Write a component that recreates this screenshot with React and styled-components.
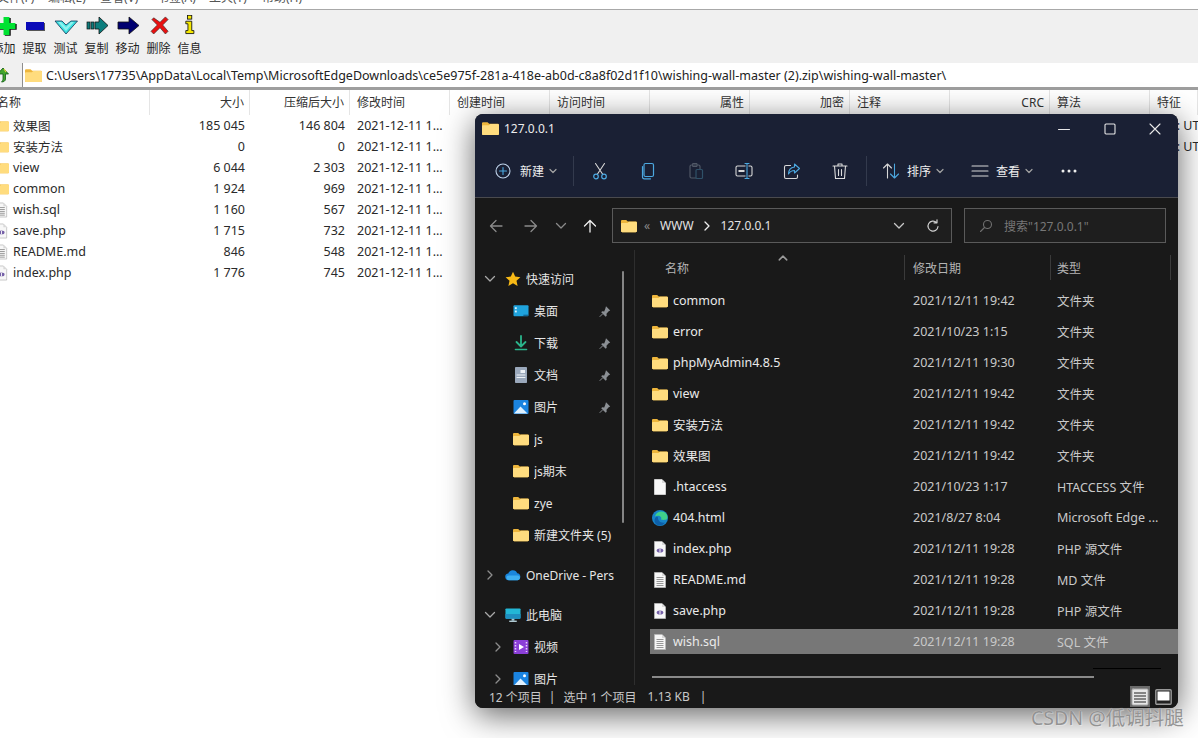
import React from "react";
import styled, { createGlobalStyle } from "styled-components";

const Global = createGlobalStyle`
  html, body { margin: 0; padding: 0; background: #fff; }
  * { box-sizing: border-box; }
  body { font-family: "Noto Sans", "Noto Sans CJK SC", sans-serif; font-size: 12.5px; color: #222; }
`;

const Page = styled.div`
  position: relative; width: 1198px; height: 738px; overflow: hidden; background: #fff;
`;
const MenuBar = styled.div`
  height: 10px; display: flex; align-items: flex-end; overflow: hidden; padding-bottom: 4px;
  border-bottom: 1px solid #a8a8a8; line-height: 14px; font-size: 12px; color: #555;
  gap: 14px; white-space: nowrap; margin-left: -3px;
`;
const MenuItem = styled.span` flex: none; width: ${p => p.$w}px; `;
const Toolbar = styled.div`
  height: 52px; background: #f0f0f0; display: flex; margin-left: -12px;
`;
const ToolButton = styled.div`
  width: 31px; display: flex; flex-direction: column; align-items: center; padding-top: 5px; flex: none;
`;
const ToolLabel = styled.span` font-size: 12px; line-height: 14px; margin-top: 1px; white-space: nowrap; color: #1f1f1f; `;
const PathBar = styled.div`
  height: 28px; background: #f0f0f0; display: flex; align-items: stretch; padding-top: 1px;
  border-bottom: 3px solid #9e9e9e;
`;
const UpBox = styled.div` display: flex; align-items: center; margin-left: -4px; flex: none; width: 26px; `;
const PathBox = styled.div`
  flex: 1; background: #fff; border-left: 1px solid #8e8e8e; display: flex; align-items: center;
  padding-left: 2px; gap: 4px; white-space: nowrap; font-size: 12.5px; color: #222; overflow: hidden;
`;
const ListGrid = styled.div`
  display: grid; grid-template-columns: 150px repeat(10, 100px) 1fr; align-items: center;
  height: ${p => p.$h}px;
  white-space: nowrap;
`;
const HeadCell = styled.div`
  height: 100%; display: flex; align-items: center; font-size: 12px; color: #333; padding-bottom: 1px;
  border-right: 1px solid #e5e5e5; padding-left: ${p => (p.$first ? 0 : 7)}px; padding-right: ${p => (p.$right ? 5 : 0)}px;
  justify-content: ${p => (p.$right ? "flex-end" : "flex-start")};
  margin-left: ${p => (p.$first ? -3 : 0)}px;
`;
const Cell = styled.div`
  overflow: hidden; padding: 0 ${p => (p.$right ? 5 : 0)}px 0 ${p => (p.$right ? 0 : 7)}px; color: #2a2a2a;
  text-align: ${p => (p.$right ? "right" : "left")};
`;
const NameCell = styled.div` display: flex; align-items: center; gap: 4px; margin-left: -6px; color: #2a2a2a; `;
const ListIcon = styled.span` width: 15px; flex: none; display: flex; justify-content: flex-end; `;

const Explorer = styled.section`
  position: absolute; left: 475px; top: 114px; width: 703px; height: 594px;
  border-radius: 8px; overflow: hidden; display: flex; flex-direction: column;
  background: #191919; color: #e6e6e6; box-shadow: 0 7px 32px rgba(0,0,0,.62);
`;
const TitleBar = styled.div` height: 29px; background: #1a2034; display: flex; align-items: center; padding-left: 7px; gap: 5px; font-size: 12px; color: #ececec; `;
const WinControls = styled.div` margin-left: auto; display: flex; `;
const WinBtn = styled.div` width: 45.5px; display: flex; justify-content: center; align-items: center; `;
const CommandBar = styled.div`
  height: 55px; background: #1a2034; border-bottom: 1px solid #4a4a4e; display: flex; align-items: center; padding: 1px 0 0 16px;
`;
const CmdBtn = styled.div`
  width: ${p => p.$w}px; flex: none; display: flex; align-items: center;
  justify-content: ${p => (p.$center ? "center" : "flex-start")}; color: #eee; font-size: 12px;
`;
const CmdSlot = styled.span` width: 24px; flex: none; display: flex; justify-content: center; `;
const CmdLabel = styled.span` margin-left: ${p => p.$ml}px; `;
const CmdCaret = styled.span` margin-left: 5px; display: flex; `;
const CmdSep = styled.div` width: 1px; height: 30px; background: #333a4d; flex: none; margin: 0 ${p => p.$r}px 0 ${p => p.$l}px; `;
const NavBar = styled.div` height: 52px; display: flex; padding: 10px 0 7px 4px; `;
const NavBtn = styled.div` width: ${p => p.$w}px; flex: none; display: flex; align-items: center; justify-content: center; `;
const AddressBox = styled.div`
  width: 340px; margin-left: 5px; border: 1px solid #5a5a5a; background: #1e1e1e; display: flex; align-items: center;
  padding-left: 8px; font-size: 12px; color: #e4e4e4; flex: none;
`;
const Crumb = styled.span` display: flex; margin-left: ${p => p.$ml}px; color: ${p => p.$c || "inherit"}; `;
const SearchBox = styled.div`
  width: 202px; margin-left: 12px; border: 1px solid #5a5a5a; background: #1e1e1e; display: flex; align-items: center;
  padding-left: 14px; gap: 11px; color: #777; font-size: 12px; flex: none;
`;
const Main = styled.div` flex: 1; min-height: 0; display: flex; overflow: hidden; `;
const Sidebar = styled.nav`
  position: relative; width: 160px; flex: none; border-right: 1px solid #2e2e2e; padding-top: 13px; overflow: hidden;
`;
const SideScroll = styled.div`
  position: absolute; left: 147px; top: 21px; width: 2px; height: 252px; background: #858585; border-radius: 1px;
`;
const SideRow = styled.div`
  width: 139px; height: 32px; display: flex; align-items: center; flex: none;
  padding-left: ${p => 7 + p.$level * 8}px; margin-top: ${p => p.$mt || 0}px; color: #e6e6e6; font-size: 12px;
`;
const Chevron = styled.span` width: 16px; flex: none; display: flex; justify-content: center; margin-right: 7px; `;
const SideIcon = styled.span` width: 16px; height: 16px; flex: none; display: flex; align-items: center; justify-content: center; margin-right: 5px; `;
const SideLabel = styled.span` flex: 1; min-width: 0; overflow: hidden; white-space: nowrap; `;
const Pin = styled.span` flex: none; width: 12px; margin-right: 3px; display: flex; `;
const Content = styled.div` position: relative; flex: 1; min-width: 0; padding: 5px 0 0 15px; `;
const FileGrid = styled.div`
  display: grid; grid-template-columns: 255px 146px 1fr; align-items: center; height: ${p => p.$h}px; white-space: nowrap;
`;
const FHead = styled.div`
  position: relative; height: 100%; display: flex; align-items: center; font-size: 12px; color: #b4b4b4;
  padding-left: ${p => p.$pl}px; width: ${p => p.$w || "auto"}; border-right: 1px solid #3a3a3a;
`;
const SortCaret = styled.span` position: absolute; left: 128px; top: -2px; display: flex; `;
const FileRows = styled.div` display: flex; flex-direction: column; gap: 6px; margin-top: 8px; `;
const FileRow = styled(FileGrid)` background: ${p => (p.$sel ? "#777" : "transparent")}; `;
const FName = styled.div` display: flex; align-items: center; gap: 5px; padding-left: 2px; color: #eaeaea; `;
const FIcon = styled.span` width: 16px; height: 16px; flex: none; display: flex; align-items: center; justify-content: center; `;
const FDate = styled.div` padding-left: 8px; color: #c9c9c9; `;
const FType = styled.div` padding-left: 6px; color: #c9c9c9; overflow: hidden; `;
const HScroll = styled.div` height: 2px; width: 442px; margin: 22px 0 0 2px; background: #8a8a8a; `;
const HLine = styled.div` position: absolute; left: 458px; top: 418px; width: 68px; height: 1px; background: #000; `;
const StatusBar = styled.div`
  height: 23px; background: #191919; display: flex; align-items: center; padding-left: 14px; font-size: 12px; color: #c8c8c8; white-space: nowrap;
`;
const StatusItem = styled.span` margin-right: ${p => p.$mr}px; `;
const StatusViews = styled.div` margin-left: auto; display: flex; align-items: center; gap: 3px; margin-right: 5px; `;
const ViewBtn = styled.span`
  width: 20px; height: 21px; display: flex; align-items: center; justify-content: center; background: ${p => (p.$on ? "#6a6a6a" : "transparent")};
`;
const Watermark = styled.div`
  position: absolute; left: 1031px; top: 705px; font-size: 19.5px; line-height: 26px; color: #939393; white-space: nowrap;
  text-shadow: 0 0 1px #e4e4e4, 1px 1px 0 rgba(255,255,255,.3);
`;

/* ---------- icons ---------- */
const Folder = ({ s = 16 }) => (
  <svg width={s} height={s} viewBox="0 0 16 16">
    <path d="M0 3.2C0 2.500.5 2 1.200 2h4l1.600 1.600h7.900c.7 0 1.300.6 1.300 1.300V13c0 .7-.6 1.200-1.300 1.200H1.200C.5 14.200 0 13.700 0 13z" fill="#eeb63c" />
    <path d="M0 6c0-.6.5-1 1-1h5.500l1.300-1.300h6.900c.7 0 1.300.5 1.300 1.200V13c0 .7-.6 1.200-1.300 1.200H1.200C.5 14.200 0 13.700 0 13z" fill="#ffdc7e" />
  </svg>
);
const Page16 = ({ lines, php, dim }) => (
  <svg width="16" height="16" viewBox="0 0 16 16">
    <path d="M2.500.5h7.500l3.500 3.500v11.500h-11z" fill="#f7f7f7" stroke={dim ? "#b9b9b9" : "#ddd"} strokeWidth=".8" />
    <path d="M10 .5v3.500h3.500" fill="#d8d8d8" />
    {lines && [5, 7, 9, 11, 13].map(y => <rect key={y} x="4.500" y={y} width="7" height=".9" fill="#8d8d8d" />)}
    {php && <><ellipse cx="8" cy="9.500" rx="3.300" ry="2" fill="#7560a8" /><rect x="7.500" y="7.800" width="1" height="3.500" fill="#f7f7f7" /></>}
  </svg>
);
const Edge = () => (
  <svg width="16" height="16" viewBox="0 0 16 16">
    <circle cx="8" cy="8" r="8" fill="#1784c9" />
    <path d="M3 6.500C4 2 9 .5 12.500 2.300 15.500 4 16 7.500 15 9c-1 1-4 1.200-6 .5 1.500-2.500-2-5-6-3z" fill="#3fd08a" />
    <path d="M6 8c0 3 3 5.500 7 4.500-2 3-6 4-9 1.500-2-2-2-5 0-7 .8-.5 2-.5 2 1z" fill="#0d5fa8" />
  </svg>
);
const Plus = () => (
  <svg width="26" height="26" viewBox="0 0 26 26">
    <g transform="translate(15.5 11) scale(.85) translate(-12 -13.500)">
      <path d="M10 4h7v7h7v7h-7v7h-7v-7H3v-7h7z" fill="#111" />
      <path d="M8.500 3h7v7h7v7h-7v7h-7v-7h-7v-7h7z" fill="#00e232" />
    </g>
  </svg>
);
const Minus = () => (
  <svg width="26" height="26" viewBox="0 0 26 26">
    <rect x="5" y="8" width="18" height="8" fill="#555" />
    <rect x="4" y="7" width="18" height="8" fill="#0a0ab8" />
  </svg>
);
const Check = () => (
  <svg width="26" height="26" viewBox="0 0 26 26">
    <path d="M2 6h7l4 4 5-4h6.500L13 19z" fill="#38e0e0" stroke="#135" strokeWidth=".8" />
    <path d="M5 7h3l5 5 5-5h3l-8 9z" fill="#8ef2ee" />
  </svg>
);
const ArrowCopy = () => (
  <svg width="26" height="26" viewBox="0 0 26 26">
    <g transform="translate(1 -2)">
      <rect x="2" y="9" width="3" height="7" fill="#0f7c7c" stroke="#111" strokeWidth=".7" />
      <rect x="6" y="9" width="3" height="7" fill="#0f7c7c" stroke="#111" strokeWidth=".7" />
      <path d="M10 9h4V4l9 8.500-9 8.500v-5h-4z" fill="#0c7d7d" stroke="#111" strokeWidth=".8" />
    </g>
  </svg>
);
const ArrowMove = () => (
  <svg width="26" height="26" viewBox="0 0 26 26">
    <path transform="translate(1 -2)" d="M2 9h11V4l10 8.500L13 21v-5H2z" fill="#000070" stroke="#111" strokeWidth=".8" />
  </svg>
);
const Cross = () => (
  <svg width="26" height="26" viewBox="0 0 26 26">
    <path transform="translate(14 10) scale(.9) translate(-13 -13)" d="M6 5l7 5 6-6 3 3-6 6 6 7-3 3-6-7-7 7-3-3 7-7-6-6z" fill="#e81010" stroke="#333" strokeWidth=".7" />
  </svg>
);
const Info = () => (
  <svg width="26" height="26" viewBox="0 0 26 26">
    <g transform="translate(2 -1) scale(.85)">
      <rect x="10" y="1.500" width="5" height="4.500" fill="#f5e800" stroke="#111" />
      <path d="M8 8.500h7v11h2.500v3.500H8v-3.500h2.500v-8H8z" fill="#f5e800" stroke="#111" />
    </g>
  </svg>
);
const Up = () => (
  <svg width="14" height="16" viewBox="0 0 14 16">
    <path d="M7 1l5.500 6H9.500v5c0 2-2 3-4 3 1-1 1.500-2 1.500-3V7H1.500z" fill="#42a52f" stroke="#0c5a12" strokeWidth=".8" />
    <path d="M8 2l2 3" stroke="#e5d43a" strokeWidth="1.200" />
  </svg>
);
const S = ({ w = 20, h = 20, vb = "0 0 20 20", children }) => (
  <svg width={w} height={h} viewBox={vb} fill="none" strokeLinecap="round" strokeLinejoin="round">{children}</svg>
);
const Caret = ({ c = "#a4a4a4", s = 8, w = 1.200, up }) => (
  <S w={s} h={s} vb="0 0 8 8"><path d={up ? "M1 5.500l3-3 3 3" : "M1 2.500l3 3 3-3"} stroke={c} strokeWidth={w} /></S>
);
const RightC = ({ c = "#8d8d8d" }) => <S w={8} h={10} vb="0 0 8 10"><path d="M2 1l4 4-4 4" stroke={c} strokeWidth="1.300" /></S>;
const DownC = ({ c = "#a9a9a9" }) => <S w={12} h={10} vb="0 0 12 10"><path d="M1.500 2.500l4.500 4.500 4.500-4.500" stroke={c} strokeWidth="1.300" /></S>;

const NewIcon = () => <S w={18} h={18} vb="0 0 18 18"><circle cx="9" cy="9" r="7" stroke="#bcd0e8" strokeWidth="1.100" /><path d="M9 5.500v7M5.500 9h7" stroke="#4ca8e0" strokeWidth="1.100" /></S>;
const Cut = () => <S><path d="M5.500 2.500l7 10.500M14.500 2.500l-7 10.500" stroke="#d8d8d8" strokeWidth="1.100" /><circle cx="6" cy="15.500" r="2.300" stroke="#4ca8e0" strokeWidth="1.200" /><circle cx="14" cy="15.500" r="2.300" stroke="#4ca8e0" strokeWidth="1.200" /></S>;
const CopyI = () => <S><rect x="6" y="2.500" width="9.500" height="13" rx="1.500" stroke="#4ca8e0" strokeWidth="1.200" /><path d="M4.500 5.500v10.500c0 1 .8 1.800 2 1.800h6" stroke="#4ca8e0" strokeWidth="1.200" /></S>;
const Paste = () => <S><rect x="4" y="4" width="10" height="13" rx="1.500" stroke="#505866" strokeWidth="1.200" /><rect x="7" y="2.500" width="4" height="3" stroke="#505866" /><rect x="10" y="8.500" width="6.500" height="9" rx="1" fill="#1a2034" stroke="#2f5168" strokeWidth="1.200" /></S>;
const Rename = () => <S><rect x="2" y="5" width="16" height="10" rx="1.500" stroke="#d8d8d8" strokeWidth="1.100" /><rect x="4.500" y="9" width="6" height="2" fill="#d8d8d8" /><rect x="11.500" y="3" width="3" height="14" fill="#1a2034" /><path d="M13 2.500v15M11 2.500h4M11 17.500h4" stroke="#4ca8e0" strokeWidth="1.100" /></S>;
const Share = () => <S><path d="M8.500 4.500H4c-1 0-1.500.6-1.500 1.500v10c0 1 .6 1.500 1.500 1.500h10c1 0 1.500-.6 1.500-1.500v-2" stroke="#d8d8d8" strokeWidth="1.100" /><path d="M12.500 3l5 4.500-5 4.500V9.500c-3 0-4.500 1-6 3.500 0-4 2-6.500 6-7z" stroke="#4ca8e0" strokeWidth="1.100" /></S>;
const Trash = () => <S><path d="M3 5h14M8 5V3h4v2M4.500 5l1 12.500h9l1-12.500M8.500 8.500v6M11.500 8.500v6" stroke="#dcdcdc" strokeWidth="1.100" /></S>;
const SortI = () => <S><path d="M6.500 17V3.500M2.500 7l4-4 4 4" stroke="#d8d8d8" strokeWidth="1.100" /><path d="M13.500 3v13.500M9.500 13l4 4 4-4" stroke="#4ca8e0" strokeWidth="1.100" /></S>;
const ViewI = () => <S w={18} h={14} vb="0 0 18 14"><path d="M1 2h16M1 7h16M1 12h16" stroke="#d8d8d8" strokeWidth="1.100" /></S>;
const More = () => <S w={18} h={6} vb="0 0 18 6"><circle cx="3" cy="3" r="1.500" fill="#eee" /><circle cx="9" cy="3" r="1.500" fill="#eee" /><circle cx="15" cy="3" r="1.500" fill="#eee" /></S>;
const Back = ({ c }) => <S w={14} h={14} vb="0 0 14 14"><path d="M13 7H1.500M7 1.500L1.500 7 7 12.500" stroke={c} strokeWidth="1.300" /></S>;
const Fwd = ({ c }) => <S w={14} h={14} vb="0 0 14 14"><path d="M1 7h11.500M7 1.500L12.500 7 7 12.500" stroke={c} strokeWidth="1.300" /></S>;
const UpA = () => <S w={14} h={14} vb="0 0 14 14"><path d="M7 13V1.500M1.500 7L7 1.500 12.500 7" stroke="#f0f0f0" strokeWidth="1.300" /></S>;
const Refresh = () => <S w={14} h={14} vb="0 0 14 14"><path d="M12 7.500a5 5 0 1 1-1.500-4M11 .8v3h-3" stroke="#cfcfcf" strokeWidth="1.200" /></S>;
const SearchI = () => <S w={14} h={14} vb="0 0 14 14"><circle cx="8.500" cy="5.500" r="4" stroke="#707070" strokeWidth="1.100" /><path d="M5.500 8.500L1.500 12.500" stroke="#707070" strokeWidth="1.100" /></S>;
const Min = () => <S w={12} h={12} vb="0 0 12 12"><path d="M.5 6.500h11" stroke="#e8e8e8" strokeWidth="1.100" /></S>;
const Max = () => <S w={12} h={12} vb="0 0 12 12"><rect x="1" y="1" width="10" height="10" rx="1" stroke="#e8e8e8" strokeWidth="1.100" /></S>;
const Close = () => <S w={12} h={12} vb="0 0 12 12"><path d="M1 1l10 10M11 1L1 11" stroke="#e8e8e8" strokeWidth="1.100" /></S>;
const Star = () => <S w={16} h={16} vb="0 0 16 16"><path d="M8 .8l2.200 4.800 5.200.6-3.900 3.500 1.100 5.200L8 12.300l-4.600 2.600 1.100-5.200L.6 6.200l5.200-.6z" fill="#f7b916" /></S>;
const PinI = () => <S w={13} h={13} vb="0 0 12 12"><path d="M7 .8l4.200 4.200-1.500.7-2.200 2.500.2 2-1 1-4.500-4.500 1-1 2 .2L6.300 3.200z" fill="#8b8f94" /><path d="M3.500 8.500L1 11" stroke="#8b8f94" /></S>;
const Desk = () => <S w={17} h={16} vb="0 0 17 16"><rect x=".5" y="2" width="16" height="11.500" rx="1" fill="#1fa3dd" /><rect x="2" y="4" width="2" height="2" fill="#d8f3ff" /><rect x="2" y="7.500" width="2" height="2" fill="#d8f3ff" /><rect x="11" y="12" width="5" height="1" fill="#0b4f7d" /></S>;
const Down = () => <S w={16} h={16} vb="0 0 16 16"><path d="M8 1v10M3.500 7L8 11.500 12.500 7" stroke="#2bb58c" strokeWidth="1.800" /><path d="M2.500 14.500h11" stroke="#2bb58c" strokeWidth="1.600" /></S>;
const Doc = () => <S w={14} h={16} vb="0 0 14 16"><rect x="1" y="0" width="12" height="16" rx=".8" fill="#9aa8bb" /><rect x="6.500" y="3" width="4.500" height="3" fill="#eef2f7" /><path d="M3 8h8M3 10.500h8" stroke="#eef2f7" /></S>;
const Pic = () => <S w={16} h={16} vb="0 0 16 16"><rect x=".5" y="1" width="15" height="14" rx="1" fill="#1b84e0" /><circle cx="11.500" cy="4.800" r="1.500" fill="#fff" /><path d="M1 14.500L7.500 7.500l7 7z" fill="#dff1ff" /></S>;
const Cloud = () => <S w={17} h={12} vb="0 0 17 12"><path d="M4 11.500a3.500 3.500 0 0 1-.5-7A5 5 0 0 1 13 4.200a3.700 3.700 0 0 1 .3 7.300z" fill="#1a86dc" /><path d="M4 11.500a2.500 2.500 0 0 1 0-5h9.500a2.500 2.500 0 0 1 0 5z" fill="#3eaef0" /></S>;
const PC = () => <S w={17} h={16} vb="0 0 17 16"><rect x=".5" y="1" width="16" height="11" rx="1" fill="#23b7d6" /><path d="M.5 7h16v4a1 1 0 0 1-1 1h-14a1 1 0 0 1-1-1z" fill="#1f8fc0" /><rect x="7" y="12" width="3" height="2" fill="#9ec7d6" /><rect x="4.500" y="14" width="8" height="1.300" fill="#c7e4ee" /></S>;
const Video = () => <S w={16} h={16} vb="0 0 16 16"><rect x=".5" y="1" width="15" height="14" rx="1" fill="#8b3fd8" /><path d="M6 5l5 3-5 3z" fill="#fff" /><path d="M2.500 3v10M13.500 3v10" stroke="#e6cffb" strokeWidth="1.500" strokeDasharray="1.500 1.500" strokeLinecap="butt" /></S>;
const ViewList = () => <S w={18} h={18} vb="0 0 18 18"><rect x="1" y="1" width="16" height="16" rx="1" fill="#e8e8e8" stroke="#aaa" /><path d="M3 5h12M3 8h12M3 11h12M3 14h12" stroke="#222" strokeWidth="1.100" strokeLinecap="butt" /></S>;
const ViewTile = () => <S w={17} h={16} vb="0 0 17 16"><rect x=".8" y=".8" width="15.400" height="14.400" rx="1" fill="#222" stroke="#999" strokeWidth="1.400" /><rect x="2.500" y="2.500" width="12" height="9" fill="#fff" /></S>;

/* ---------- data ---------- */
const menus = [["文件(F)", 37], ["编辑(E)", 38], ["查看(V)", 43], ["书签(A)", 38], ["工具(T)", 39], ["帮助(H)", 41]];
const tools = [[Plus, "添加"], [Minus, "提取"], [Check, "测试"], [ArrowCopy, "复制"], [ArrowMove, "移动"], [Cross, "删除"], [Info, "信息"]];
const heads = [["名称"], ["大小", 1], ["压缩后大小", 1], ["修改时间"], ["创建时间"], ["访问时间"], ["属性", 1], ["加密", 1], ["注释"], ["CRC", 1], ["算法"], ["特征"]];
const archive = [
  ["效果图", "185 045", "146 804", "f", "NT : UTC"],
  ["安装方法", "0", "0", "f", "NT : UTC"],
  ["view", "6 044", "2 303", "f"],
  ["common", "1 924", "969", "f"],
  ["wish.sql", "1 160", "567", "t"],
  ["save.php", "1 715", "732", "p"],
  ["README.md", "846", "548", "t"],
  ["index.php", "1 776", "745", "p"],
];
const rowIcon = k => k === "f" ? <Folder s={15} /> : k === "t" ? <Page16 lines dim /> : k === "p" ? <Page16 php dim /> : k === "e" ? <Edge /> : <Page16 />;
const files = [
  ["common", "2021/12/11 19:42", "文件夹", "f"],
  ["error", "2021/10/23 1:15", "文件夹", "f"],
  ["phpMyAdmin4.8.5", "2021/12/11 19:30", "文件夹", "f"],
  ["view", "2021/12/11 19:42", "文件夹", "f"],
  ["安装方法", "2021/12/11 19:42", "文件夹", "f"],
  ["效果图", "2021/12/11 19:42", "文件夹", "f"],
  [".htaccess", "2021/10/23 1:17", "HTACCESS 文件", "b"],
  ["404.html", "2021/8/27 8:04", "Microsoft Edge ...", "e"],
  ["index.php", "2021/12/11 19:28", "PHP 源文件", "p"],
  ["README.md", "2021/12/11 19:28", "MD 文件", "t"],
  ["save.php", "2021/12/11 19:28", "PHP 源文件", "p"],
  ["wish.sql", "2021/12/11 19:28", "SQL 文件", "t", true],
];
const side = [
  { l: "快速访问", level: 0, icon: <Star />, c: "d" },
  { l: "桌面", level: 1, icon: <Desk />, pin: 1 },
  { l: "下载", level: 1, icon: <Down />, pin: 1 },
  { l: "文档", level: 1, icon: <Doc />, pin: 1 },
  { l: "图片", level: 1, icon: <Pic />, pin: 1 },
  { l: "js", level: 1, icon: <Folder /> },
  { l: "js期末", level: 1, icon: <Folder /> },
  { l: "zye", level: 1, icon: <Folder /> },
  { l: "新建文件夹 (5)", level: 1, icon: <Folder /> },
  { l: "OneDrive - Personal", level: 0, icon: <Cloud />, c: "r", mt: 8 },
  { l: "此电脑", level: 0, icon: <PC />, c: "d", mt: 8 },
  { l: "视频", level: 1, icon: <Video />, c: "r" },
  { l: "图片", level: 1, icon: <Pic />, c: "r" },
];

export default function App() {
  return (
    <Page>
      <Global />
      <MenuBar>{menus.map(([m, w]) => <MenuItem key={m} $w={w}>{m}</MenuItem>)}</MenuBar>
      <Toolbar>
        {tools.map(([I, l]) => <ToolButton key={l}><I /><ToolLabel>{l}</ToolLabel></ToolButton>)}
      </Toolbar>
      <PathBar>
        <UpBox><Up /></UpBox>
        <PathBox><Folder s={17} />C:\Users\17735\AppData\Local\Temp\MicrosoftEdgeDownloads\ce5e975f-281a-418e-ab0d-c8a8f02d1f10\wishing-wall-master (2).zip\wishing-wall-master\</PathBox>
      </PathBar>
      <ListGrid $h={25}>
        {heads.map(([h, r], i) => <HeadCell key={h} $right={r} $first={i === 0}>{h}</HeadCell>)}
      </ListGrid>
      {archive.map(([n, a, b, k, f]) => (
        <ListGrid key={n} $h={21}>
          <NameCell><ListIcon>{rowIcon(k)}</ListIcon>{n}</NameCell>
          <Cell $right>{a}</Cell>
          <Cell $right>{b}</Cell>
          <Cell>2021-12-11 1...</Cell>
          <Cell /><Cell /><Cell $right /><Cell $right /><Cell /><Cell $right /><Cell />
          <Cell>{f}</Cell>
        </ListGrid>
      ))}

      <Explorer>
        <TitleBar>
          <Folder s={17} />127.0.0.1
          <WinControls>
            <WinBtn><Min /></WinBtn><WinBtn><Max /></WinBtn><WinBtn><Close /></WinBtn>
          </WinControls>
        </TitleBar>
        <CommandBar>
          <CmdBtn $w={79}><CmdSlot><NewIcon /></CmdSlot><CmdLabel $ml={5}>新建</CmdLabel><CmdCaret><Caret /></CmdCaret></CmdBtn>
          <CmdSep $l={3} $r={2} />
          <CmdBtn $w={48} $center><Cut /></CmdBtn>
          <CmdBtn $w={48} $center><CopyI /></CmdBtn>
          <CmdBtn $w={48} $center><Paste /></CmdBtn>
          <CmdBtn $w={48} $center><Rename /></CmdBtn>
          <CmdBtn $w={48} $center><Share /></CmdBtn>
          <CmdBtn $w={48} $center><Trash /></CmdBtn>
          <CmdSep $l={2} $r={12} />
          <CmdBtn $w={89}><CmdSlot><SortI /></CmdSlot><CmdLabel $ml={4}>排序</CmdLabel><CmdCaret><Caret /></CmdCaret></CmdBtn>
          <CmdBtn $w={89}><CmdSlot><ViewI /></CmdSlot><CmdLabel $ml={4}>查看</CmdLabel><CmdCaret><Caret /></CmdCaret></CmdBtn>
          <CmdBtn $w={24} $center><More /></CmdBtn>
        </CommandBar>
        <NavBar>
          <NavBtn $w={34}><Back c="#8a8a8a" /></NavBtn>
          <NavBtn $w={36}><Fwd c="#8a8a8a" /></NavBtn>
          <NavBtn $w={24}><DownC c="#8a8a8a" /></NavBtn>
          <NavBtn $w={34}><UpA /></NavBtn>
          <AddressBox>
            <Folder s={16} />
            <Crumb $ml={7} $c="#8a8a8a">«</Crumb>
            <Crumb $ml={10}>WWW</Crumb>
            <Crumb $ml={9}><RightC c="#eee" /></Crumb>
            <Crumb $ml={10}>127.0.0.1</Crumb>
            <Crumb $ml={122}><DownC c="#c8c8c8" /></Crumb>
            <Crumb $ml={21}><Refresh /></Crumb>
          </AddressBox>
          <SearchBox><SearchI />搜索"127.0.0.1"</SearchBox>
        </NavBar>
        <Main>
          <Sidebar>
            <SideScroll />
            {side.map((s, i) => (
              <SideRow key={i} $level={s.level} $mt={s.mt}>
                <Chevron>{s.c === "d" ? <DownC /> : s.c === "r" ? <RightC /> : null}</Chevron>
                <SideIcon>{s.icon}</SideIcon>
                <SideLabel>{s.l}</SideLabel>
                {s.pin && <Pin><PinI /></Pin>}
              </SideRow>
            ))}
          </Sidebar>
          <Content>
            <FileGrid $h={25}>
              <FHead $pl={15}>名称<SortCaret><Caret up s={10} c="#9a9a9a" /></SortCaret></FHead>
              <FHead $pl={8}>修改日期</FHead>
              <FHead $pl={6} $w="120px">类型</FHead>
            </FileGrid>
            <FileRows>
              {files.map(([n, d, t, k, sel]) => (
                <FileRow key={n} $h={25} $sel={sel}>
                  <FName><FIcon>{k === "f" ? <Folder /> : rowIcon(k)}</FIcon>{n}</FName>
                  <FDate>{d}</FDate>
                  <FType>{t}</FType>
                </FileRow>
              ))}
            </FileRows>
            <HLine />
            <HScroll />
          </Content>
        </Main>
        <StatusBar>
          <StatusItem $mr={7}>12 个项目</StatusItem>
          <StatusItem $mr={8}>|</StatusItem>
          <StatusItem $mr={11}>选中 1 个项目</StatusItem>
          <StatusItem $mr={10}>1.13 KB</StatusItem>
          <StatusItem $mr={0}>|</StatusItem>
          <StatusViews>
            <ViewBtn $on><ViewList /></ViewBtn>
            <ViewBtn><ViewTile /></ViewBtn>
          </StatusViews>
        </StatusBar>
      </Explorer>
      <Watermark>CSDN @低调抖腿</Watermark>
    </Page>
  );
}
